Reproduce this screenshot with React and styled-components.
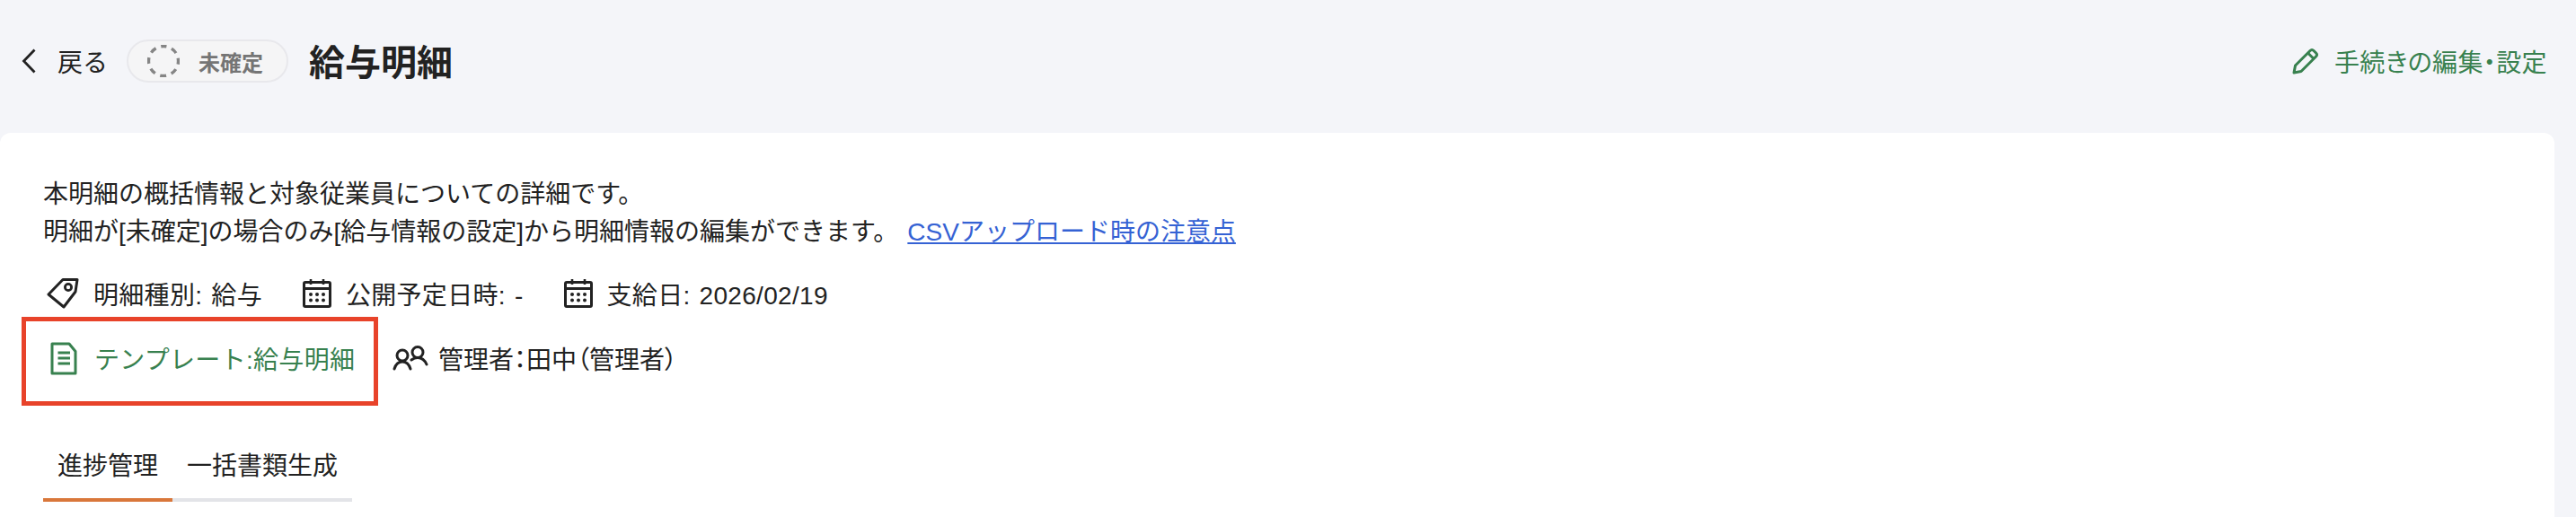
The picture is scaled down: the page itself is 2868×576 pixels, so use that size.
import styled, { createGlobalStyle } from "styled-components";

const GlobalStyle = createGlobalStyle`
  html, body { margin: 0; padding: 0; background: #f4f5f9; }
  body {
    font-family: "Liberation Sans", "Noto Sans CJK JP", sans-serif;
    color: #222;
  }
`;

const Page = styled.div`
  width: 2868px;
  height: 576px;
  overflow: hidden;
`;

const Header = styled.header`
  height: 148px;
  padding: 0 32px 12px 24px;
  box-sizing: border-box;
  display: flex;
  align-items: center;
`;

const Back = styled.a`
  display: flex;
  align-items: center;
  gap: 24px;
  font-size: 28px;
  color: #222;
`;

const Status = styled.span`
  display: flex;
  align-items: center;
  gap: 21px;
  height: 48px;
  width: 180px;
  box-sizing: border-box;
  margin-left: 21px;
  padding-left: 21px;
  border: 2px solid #e8e8ec;
  border-radius: 24px;
  background: #f5f5f6;
  color: #757575;
  font-size: 24px;
  font-weight: 700;
`;

const Title = styled.h1`
  margin: 0 0 2px 23px;
  font-size: 40px;
  font-weight: 700;
  color: #222;
`;

const EditLink = styled.a`
  margin-left: auto;
  display: flex;
  align-items: center;
  gap: 17px;
  font-size: 28px;
  font-feature-settings: "palt";
  letter-spacing: 0.4px;
  color: #38814f;
`;

const Card = styled.main`
  width: 2844px;
  height: 428px;
  box-sizing: border-box;
  padding: 48px 48px 0;
  background: #fff;
  border-radius: 12px 12px 0 0;
`;

const Description = styled.p`
  margin: 0;
  font-size: 28px;
  line-height: 42px;
  color: #222;
`;

const HelpLink = styled.a`
  margin-left: 10px;
  color: #3562d4;
  text-decoration: underline;
`;

const MetaRow = styled.div`
  display: flex;
  align-items: center;
  gap: 45px;
  margin-top: 27px;
  height: 40px;
  padding-left: 4px;
`;

const MetaItem = styled.span`
  display: flex;
  align-items: center;
  gap: 16px;
  font-size: 28px;
  letter-spacing: 0.3px;
  word-spacing: 2px;
  color: #222;
`;

const InfoRow = styled.div`
  display: flex;
  align-items: center;
  margin: 6px 0 0 -24px;
`;

const TemplateBox = styled.span`
  display: flex;
  align-items: center;
  gap: 19px;
  width: 397px;
  height: 99px;
  box-sizing: border-box;
  padding: 0 0 7px 27px;
  border: 5px solid #e8432a;
  font-size: 28px;
  letter-spacing: 0.3px;
  color: #38814f;
`;

const Manager = styled(MetaItem)`
  margin: 0 0 8px 16px;
  gap: 11px;
  letter-spacing: 0;
  word-spacing: 0;
  font-family: "Noto Sans CJK JP", sans-serif;
  font-feature-settings: "palt";
`;

const Tabs = styled.nav`
  display: flex;
  width: 344px;
  margin-top: 47px;
  border-bottom: 4px solid #e3e4e8;
`;

const Tab = styled.span`
  padding: 0 16px 14px;
  margin-bottom: -4px;
  font-size: 28px;
  line-height: 42px;
  color: #222;
  border-bottom: 4px solid ${(p) => (p.$active ? "#d9773a" : "transparent")};
`;

const Chevron = () => (
  <svg width="16" height="28" viewBox="0 0 16 28" fill="none" stroke="#222" strokeWidth="2.800">
    <path d="M14.500 1.500 2.500 14l12 12.500" />
  </svg>
);

const DashedCircle = () => (
  <svg width="36" height="36" viewBox="0 0 36 36" fill="none" stroke="#858585" strokeWidth="3.400" strokeDasharray="7 5.960" strokeDashoffset="3.500" transform="rotate(-90)">
    <circle cx="18" cy="18" r="16.500" />
  </svg>
);

const Pencil = () => (
  <svg width="30" height="30" viewBox="0 0 30 30" fill="none" stroke="#38814f" strokeWidth="3" strokeLinejoin="round">
    <path d="M2 28l1.500-8L20 3.500q2-2 4 0l2.500 2.500q2 2 0 4L10 26.500z" />
    <path d="M17.500 6l6.500 6.500" />
  </svg>
);

const TagIcon = () => (
  <svg width="36" height="36" viewBox="0 0 36 36" fill="none" stroke="#222" strokeWidth="3" strokeLinejoin="round">
    <path d="M18 2.500 34 2.500 32 16 19 33 2 19z" />
    <circle cx="24" cy="11" r="3.600" strokeWidth="2.800" />
  </svg>
);

const CalendarIcon = () => (
  <svg width="32" height="32" viewBox="0 0 32 32" fill="none" stroke="#222">
    <rect x="1.500" y="3.500" width="29" height="27" rx="1.500" strokeWidth="3" />
    <path d="M1.500 10.500h29" strokeWidth="3" />
    <path d="M9 0v6M23 0v6" strokeWidth="2.600" />
    <g fill="#222" stroke="none">
      <circle cx="9" cy="17" r="2" />
      <circle cx="16" cy="17" r="2" />
      <circle cx="23" cy="17" r="2" />
      <circle cx="9" cy="23.500" r="2" />
      <circle cx="16" cy="23.500" r="2" />
      <circle cx="23" cy="23.500" r="2" />
    </g>
  </svg>
);

const DocIcon = () => (
  <svg width="30" height="37" viewBox="0 0 30 37" fill="none" stroke="#38814f" strokeWidth="3" strokeLinejoin="round">
    <path d="M2 2h19l7 8.500V35H2z" />
    <path d="M8.500 12H22M8.500 18H22M8.500 24H22" />
  </svg>
);

const PeopleIcon = () => (
  <svg width="40" height="28" viewBox="0 0 40 28" fill="none" stroke="#222" strokeWidth="3" strokeLinecap="round">
    <circle cx="11" cy="11" r="6" />
    <circle cx="28" cy="7.500" r="6" />
    <path d="M2 26c1.500-5 5-8 9-8s7.500 3 9 8" />
    <path d="M21 16c2-1.500 4.500-2.500 7-2.500 4.500 0 8 3 10 7.500" />
  </svg>
);

export default function App() {
  return (
    <Page>
      <GlobalStyle />
      <Header>
        <Back>
          <Chevron />
          戻る
        </Back>
        <Status>
          <DashedCircle />
          未確定
        </Status>
        <Title>給与明細</Title>
        <EditLink>
          <Pencil />
          手続きの編集・設定
        </EditLink>
      </Header>
      <Card>
        <Description>
          本明細の概括情報と対象従業員についての詳細です。
          <br />
          明細が[未確定]の場合のみ[給与情報の設定]から明細情報の編集ができます。
          <HelpLink>CSVアップロード時の注意点</HelpLink>
        </Description>
        <MetaRow>
          <MetaItem>
            <TagIcon />
            明細種別: 給与
          </MetaItem>
          <MetaItem>
            <CalendarIcon />
            公開予定日時: -
          </MetaItem>
          <MetaItem>
            <CalendarIcon />
            支給日: 2026/02/19
          </MetaItem>
        </MetaRow>
        <InfoRow>
          <TemplateBox>
            <DocIcon />
            テンプレート:給与明細
          </TemplateBox>
          <Manager>
            <PeopleIcon />
            管理者：田中（管理者）
          </Manager>
        </InfoRow>
        <Tabs>
          <Tab $active>進捗管理</Tab>
          <Tab>一括書類生成</Tab>
        </Tabs>
      </Card>
    </Page>
  );
}
